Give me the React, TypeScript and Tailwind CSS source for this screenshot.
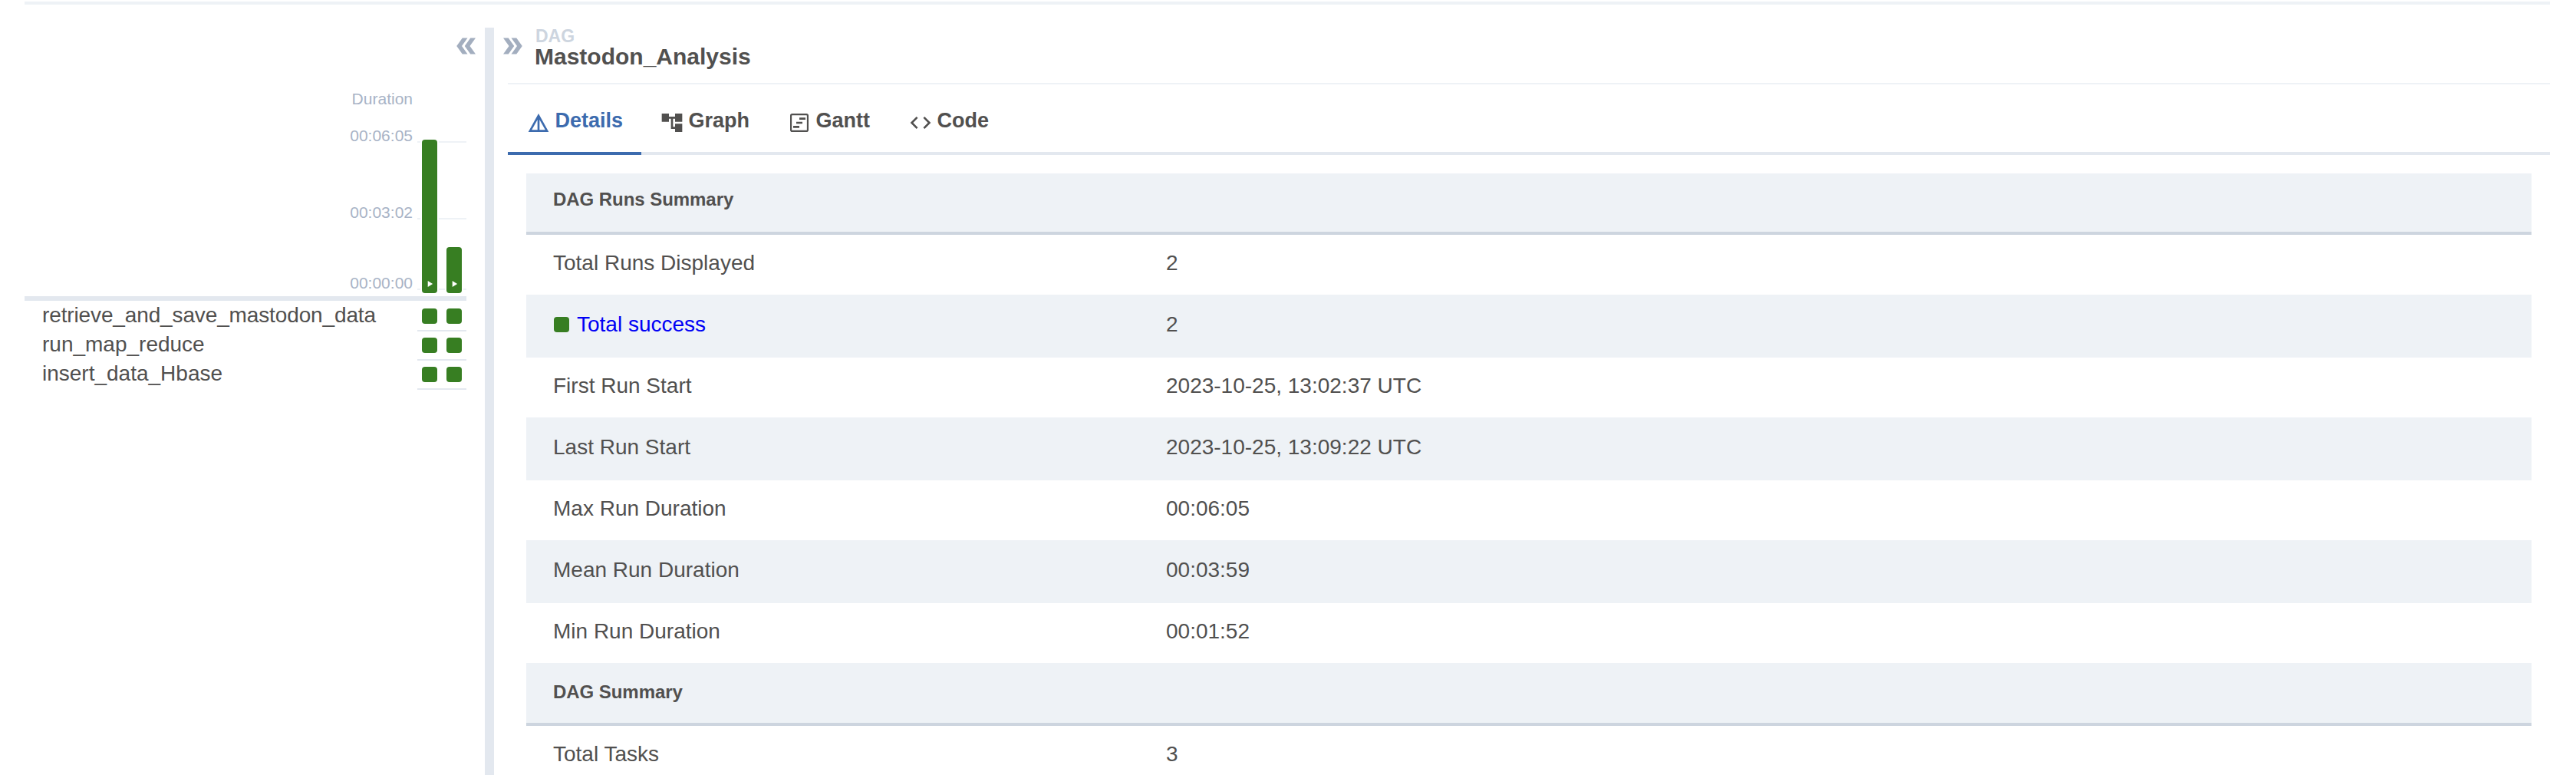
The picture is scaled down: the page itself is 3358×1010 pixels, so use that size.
import type { ReactNode } from "react";

const runs = [
  { id: "run-1", height: "h-[200px]" },
  { id: "run-2", height: "h-[60px]" },
];

const tasks = [
  { name: "retrieve_and_save_mastodon_data", tracking: "tracking-[-0.13px]" },
  { name: "run_map_reduce", tracking: "" },
  { name: "insert_data_Hbase", tracking: "" },
];

function DoubleArrow({ className = "" }: { className?: string }) {
  return (
    <svg viewBox="0 0 24 24" fill="currentColor" className={`size-9 text-[#a3aebf] ${className}`}>
      <path d="M15.5 5H11l5 7-5 7h4.5l5-7z" />
      <path d="M8.5 5H4l5 7-5 7h4.5l5-7z" />
    </svg>
  );
}

function TabIcon({ children }: { children: ReactNode }) {
  return (
    <svg viewBox="0 0 24 24" fill="currentColor" className="mt-[34px] size-8 shrink-0">
      {children}
    </svg>
  );
}

function Tab({ label, width, active, icon }: { label: string; width: string; active?: boolean; icon: ReactNode }) {
  return (
    <button
      className={`flex h-full items-start gap-[5.5px] border-b-4 pl-6 ${width} ${
        active ? "border-[#3c6bae] text-[#3c6bae]" : "border-[#e3e8ef]"
      }`}
    >
      <TabIcon>{icon}</TabIcon>
      <span className="mt-[31px] text-[27px] leading-8 font-bold">{label}</span>
    </button>
  );
}

function DurationChart() {
  return (
    <div className="mr-6 flex h-[308px]">
      <div className="flex flex-1 flex-col items-end pt-[39px] pr-1.5 text-[21px] leading-6 text-[#a8b3c6]">
        <span className="mb-6">Duration</span>
        <span className="mb-[76px]">00:06:05</span>
        <span className="mb-[68px]">00:03:02</span>
        <span>00:00:00</span>
      </div>
      <div className="relative w-16">
        <div className="absolute top-[106px] h-0.5 w-full bg-[#eef2f6]" />
        <div className="absolute top-[206px] h-0.5 w-full bg-[#eef2f6]" />
        <div className="absolute top-[298px] h-0.5 w-full bg-[#eef2f6]" />
        <div className="relative flex h-full items-end gap-2 pb-1 pl-1">
          {runs.map((run) => (
            <div key={run.id} className="w-6 bg-white px-0.5">
              <div className={`flex items-end justify-center rounded-[4px] bg-[#377e22] pb-[5px] ${run.height}`}>
                <svg viewBox="0 0 24 24" fill="white" className="size-3.5">
                  <path d="M8 5v14l11-7z" />
                </svg>
              </div>
            </div>
          ))}
        </div>
      </div>
    </div>
  );
}

function Grid() {
  return (
    <aside className="w-[600px] shrink-0">
      <div className="flex h-[42px] items-end justify-end pr-1.5">
        <DoubleArrow className="rotate-180" />
      </div>
      <DurationChart />
      <div className="mr-6 mb-0.5 h-1.5 bg-[#e3e8ef]" />
      {tasks.map((task) => (
        <div key={task.name} className="mr-6 flex h-[38px]">
          <span className={`flex-1 pl-[23px] text-[28px] leading-[33px] whitespace-nowrap ${task.tracking}`}>
            {task.name}
          </span>
          <div className="flex w-16 gap-3 border-b-2 border-[#e3e8ef] pt-2 pl-1.5">
            <div className="size-5 rounded-[4px] bg-[#377e22]" />
            <div className="size-5 rounded-[4px] bg-[#377e22]" />
          </div>
        </div>
      ))}
    </aside>
  );
}

function SectionHeader({ title, pad }: { title: string; pad: string }) {
  return (
    <div
      className={`flex h-20 items-center border-b-4 border-[#cdd5df] bg-[#eef2f6] pl-[35px] text-2xl font-bold tracking-[-0.05px] ${pad}`}
    >
      {title}
    </div>
  );
}

function Row({ label, value, striped }: { label: ReactNode; value: string; striped?: boolean }) {
  return (
    <div
      className={`flex h-20 items-center border-b-2 border-[#eef2f6] pb-[5px] pl-[35px] text-[28px] ${
        striped ? "bg-[#eef2f6]" : ""
      }`}
    >
      <div className="w-[799px]">{label}</div>
      <div>{value}</div>
    </div>
  );
}

function DetailsTable() {
  return (
    <div className="mt-6 mr-6 ml-[42px]">
      <SectionHeader title="DAG Runs Summary" pad="pb-[9px]" />
      <Row label="Total Runs Displayed" value="2" />
      <Row
        striped
        value="2"
        label={
          <div className="flex items-center">
            <span className="mt-[1px] ml-[1px] size-5 rounded-[4px] bg-[#377e22]" />
            <span className="ml-[10px] text-[#0000f5]">Total success</span>
          </div>
        }
      />
      <Row label="First Run Start" value="2023-10-25, 13:02:37 UTC" />
      <Row striped label="Last Run Start" value="2023-10-25, 13:09:22 UTC" />
      <Row label="Max Run Duration" value="00:06:05" />
      <Row striped label="Mean Run Duration" value="00:03:59" />
      <Row label="Min Run Duration" value="00:01:52" />
      <SectionHeader title="DAG Summary" pad="pb-[5px]" />
      <Row label="Total Tasks" value="3" />
    </div>
  );
}

export default function App() {
  return (
    <div className="h-[1010px] overflow-hidden bg-white pt-0.5 pr-[34px] pl-8 font-['Liberation_Sans',sans-serif] text-[#51504f]">
      <div className="h-1 bg-[#eef2f6]" />
      <div className="mt-[30px] flex h-[974px]">
        <Grid />
        <div className="w-3 shrink-0 bg-[#e3e8ef]" />
        <main className="min-w-0 flex-1">
          <div className="flex h-[72px] pl-1.5">
            <DoubleArrow className="mt-1.5" />
            <div className="ml-[11px] flex flex-col font-bold">
              <span className="pl-[1px] text-[23px] leading-[22px] text-[#cdd5df]">DAG</span>
              <span className="text-[30px] leading-[31px]">Mastodon_Analysis</span>
            </div>
          </div>
          <div className="ml-[18px] h-0.5 bg-[#eef2f6]" />
          <div className="ml-[18px] flex h-[92px]">
            <Tab
              active
              label="Details"
              width="w-[174px]"
              icon={<path d="M12 3L2 21h20L12 3zm1 5.92L18.6 19H13V8.92zm-2 0V19H5.4L11 8.92z" />}
            />
            <Tab
              label="Graph"
              width="w-[166px]"
              icon={<path d="M22 11V3h-7v3H9V3H2v8h7V8h2v10h4v3h7v-8h-7v3h-2V8h2v3z" />}
            />
            <Tab
              label="Gantt"
              width="w-[158px]"
              icon={
                <>
                  <rect x="3.8" y="3.8" width="16.4" height="16.4" rx="1.3" fill="none" stroke="currentColor" strokeWidth="1.6" />
                  <path d="M12 7h6v2h-6zM9 11h6v2H9zM6 15h6v2H6z" />
                </>
              }
            />
            <Tab
              label="Code"
              width="w-[150px]"
              icon={<path d="M9.4 16.6L4.8 12l4.6-4.6L8 6l-6 6 6 6 1.4-1.4zm5.2 0l4.6-4.6-4.6-4.6L16 6l6 6-6 6-1.4-1.4z" />}
            />
            <div className="flex-1 border-b-4 border-[#e3e8ef]" />
          </div>
          <DetailsTable />
        </main>
      </div>
    </div>
  );
}
